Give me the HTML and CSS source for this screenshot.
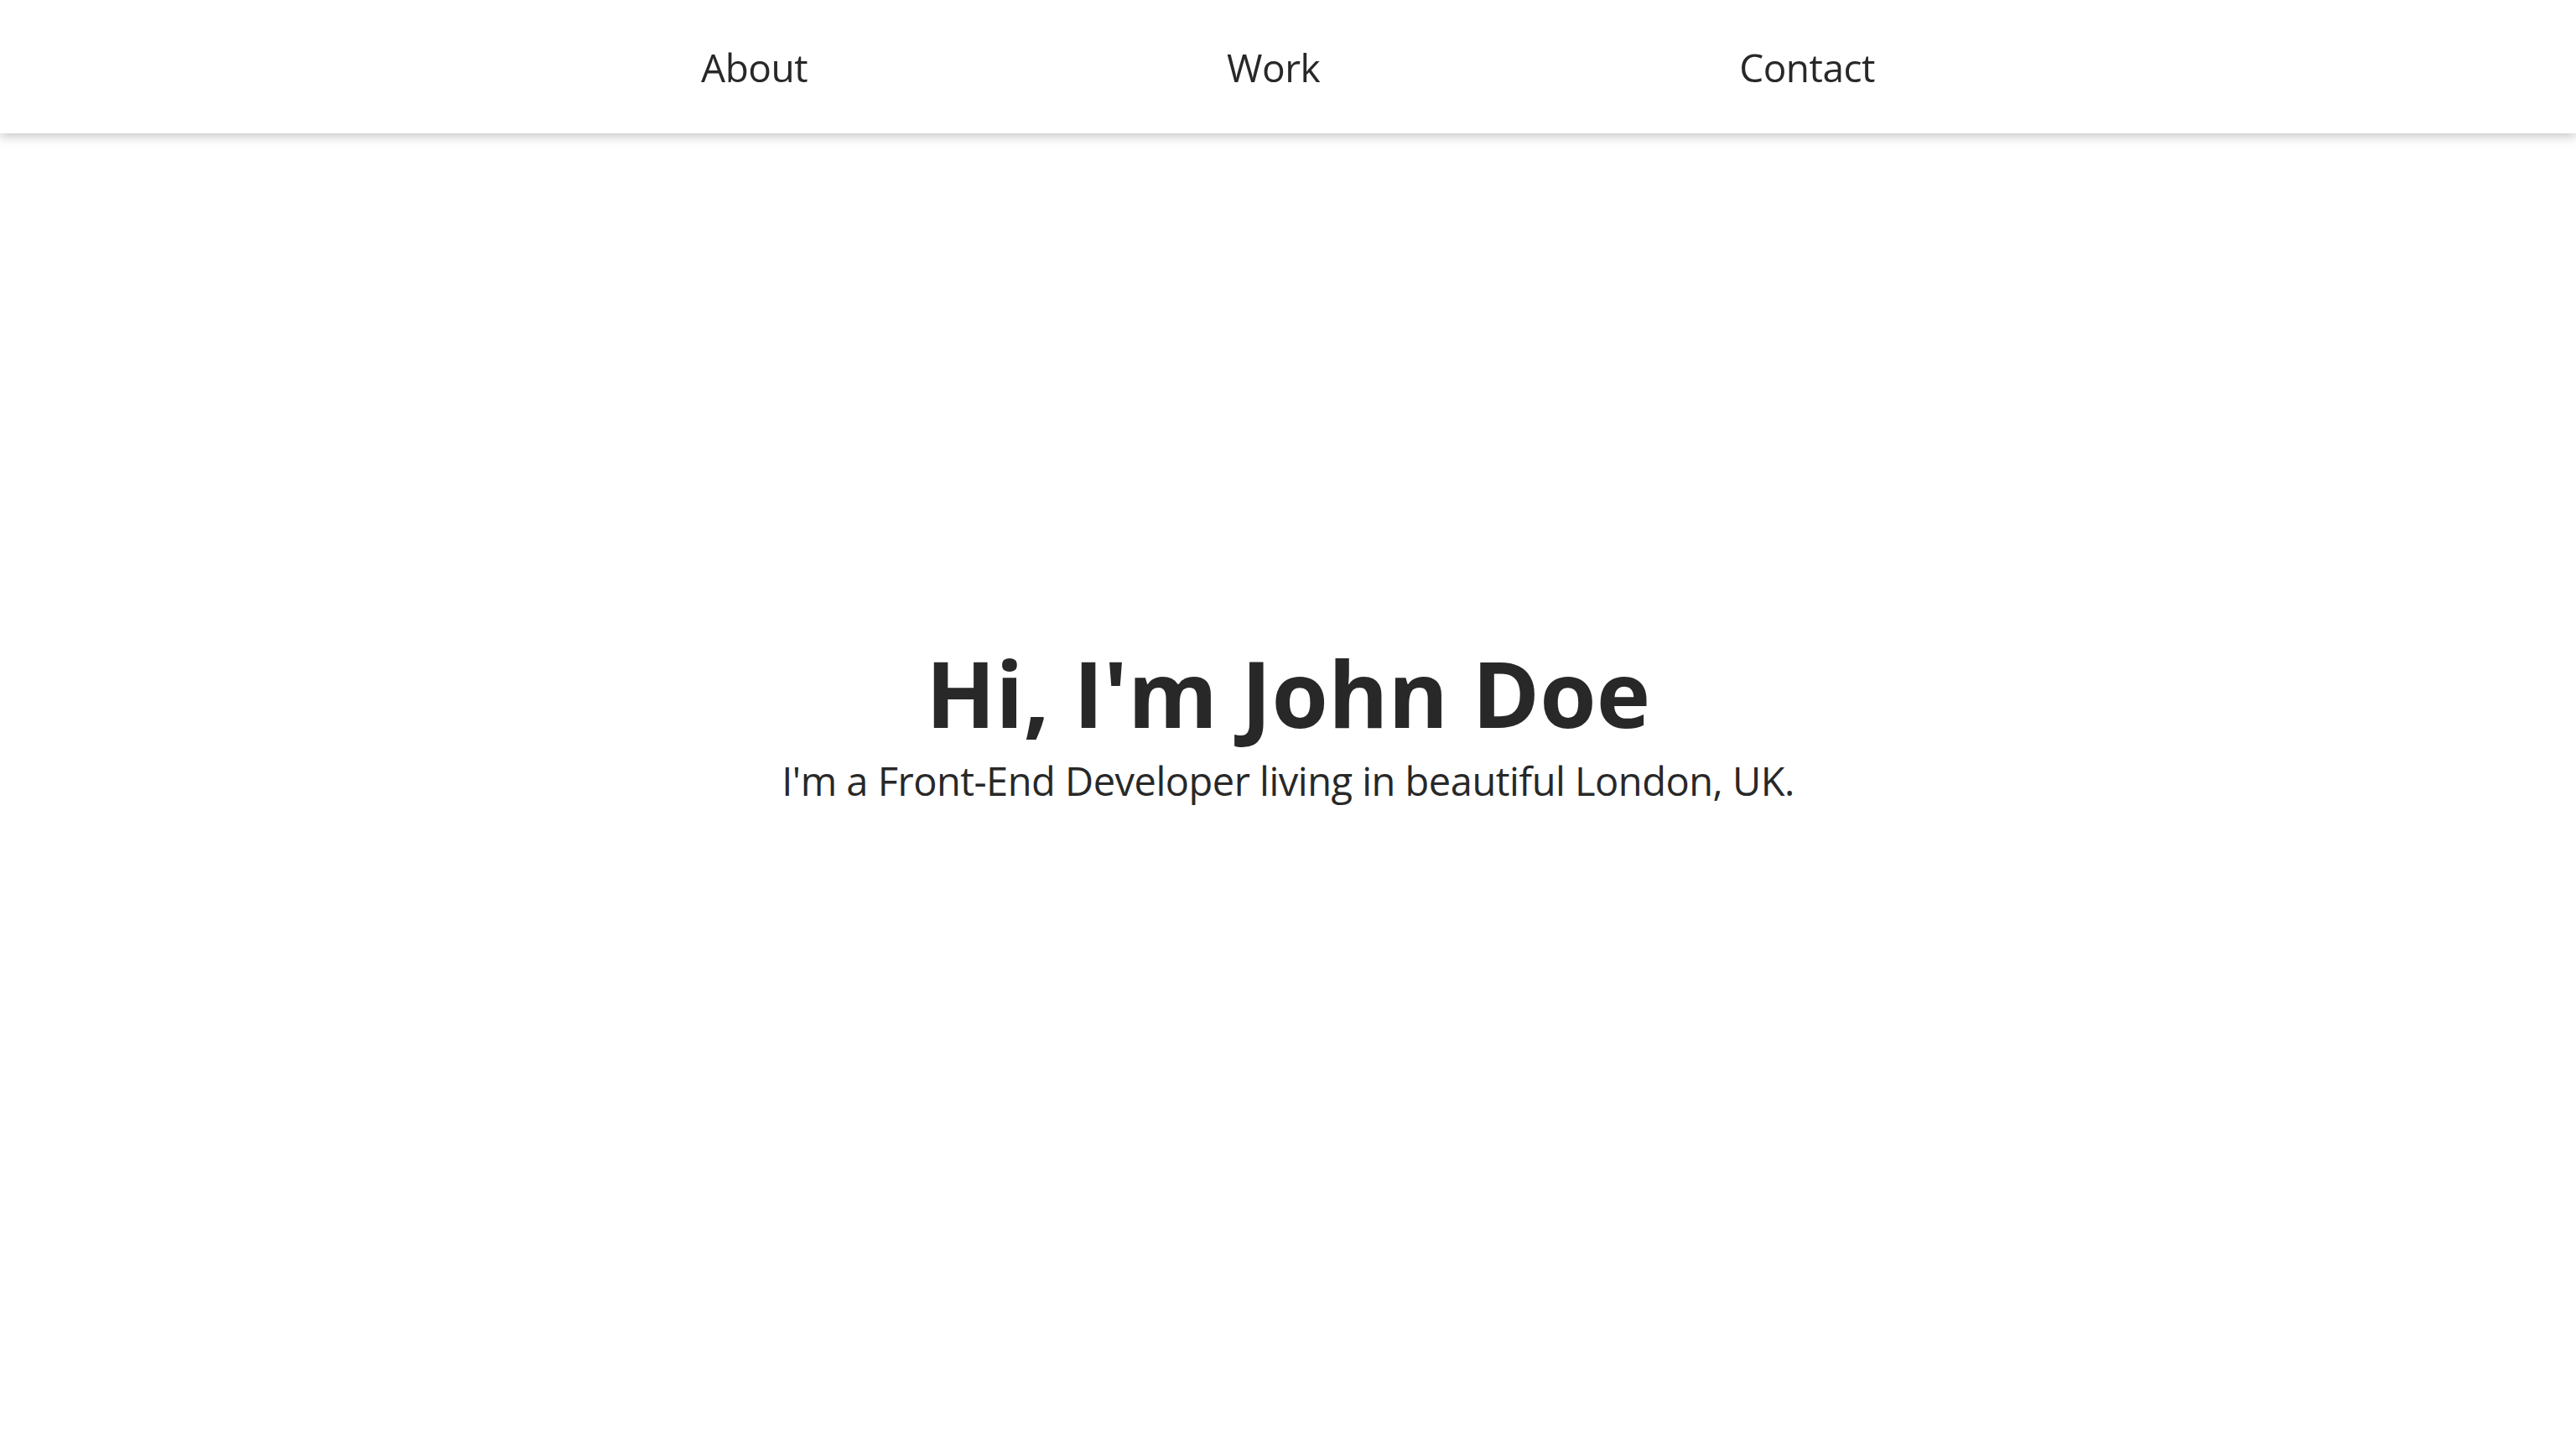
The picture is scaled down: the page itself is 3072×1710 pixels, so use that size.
FILE: index.html
```html
<!DOCTYPE html>
<html lang="en">
<head>
<meta charset="utf-8">
<title>John Doe</title>
<link rel="stylesheet" href="styles.css">
</head>
<body>
<header class="site-header">
  <nav class="nav">
    <a class="nav-link" href="#about">About</a>
    <a class="nav-link" href="#work">Work</a>
    <a class="nav-link" href="#contact">Contact</a>
  </nav>
</header>
<main class="hero">
  <h1 class="hero-title">Hi, I'm John Doe</h1>
  <p class="hero-sub">I'm a Front-End Developer living in beautiful London, UK.</p>
</main>
</body>
</html>
```

FILE: styles.css
```css
* { box-sizing: border-box; }
html, body { margin: 0; padding: 0; background: #fff; }
body {
  font-family: "Open Sans", "Noto Sans", sans-serif;
  color: #282828;
}
.site-header {
  position: fixed;
  top: 0;
  left: 0;
  right: 0;
  height: 159px;
  background: #fff;
  box-shadow: 0 4px 12px rgba(0, 0, 0, 0.22);
  display: flex;
  align-items: center;
  justify-content: center;
}
.nav {
  display: flex;
  gap: 500px;
  align-items: center;
}
.nav-link {
  font-size: 46px;
  color: #282828;
  text-decoration: none;
  letter-spacing: -0.5px;
}
.hero {
  min-height: 100vh;
  display: flex;
  flex-direction: column;
  align-items: center;
  justify-content: center;
  text-align: center;
}
.hero-title {
  margin: 6px 0 0;
  font-size: 109px;
  font-weight: 700;
  line-height: 1.36;
  letter-spacing: 0;
}
.hero-sub {
  margin: 0;
  font-size: 47px;
  line-height: 1.36;
  letter-spacing: -0.5px;
}
```
